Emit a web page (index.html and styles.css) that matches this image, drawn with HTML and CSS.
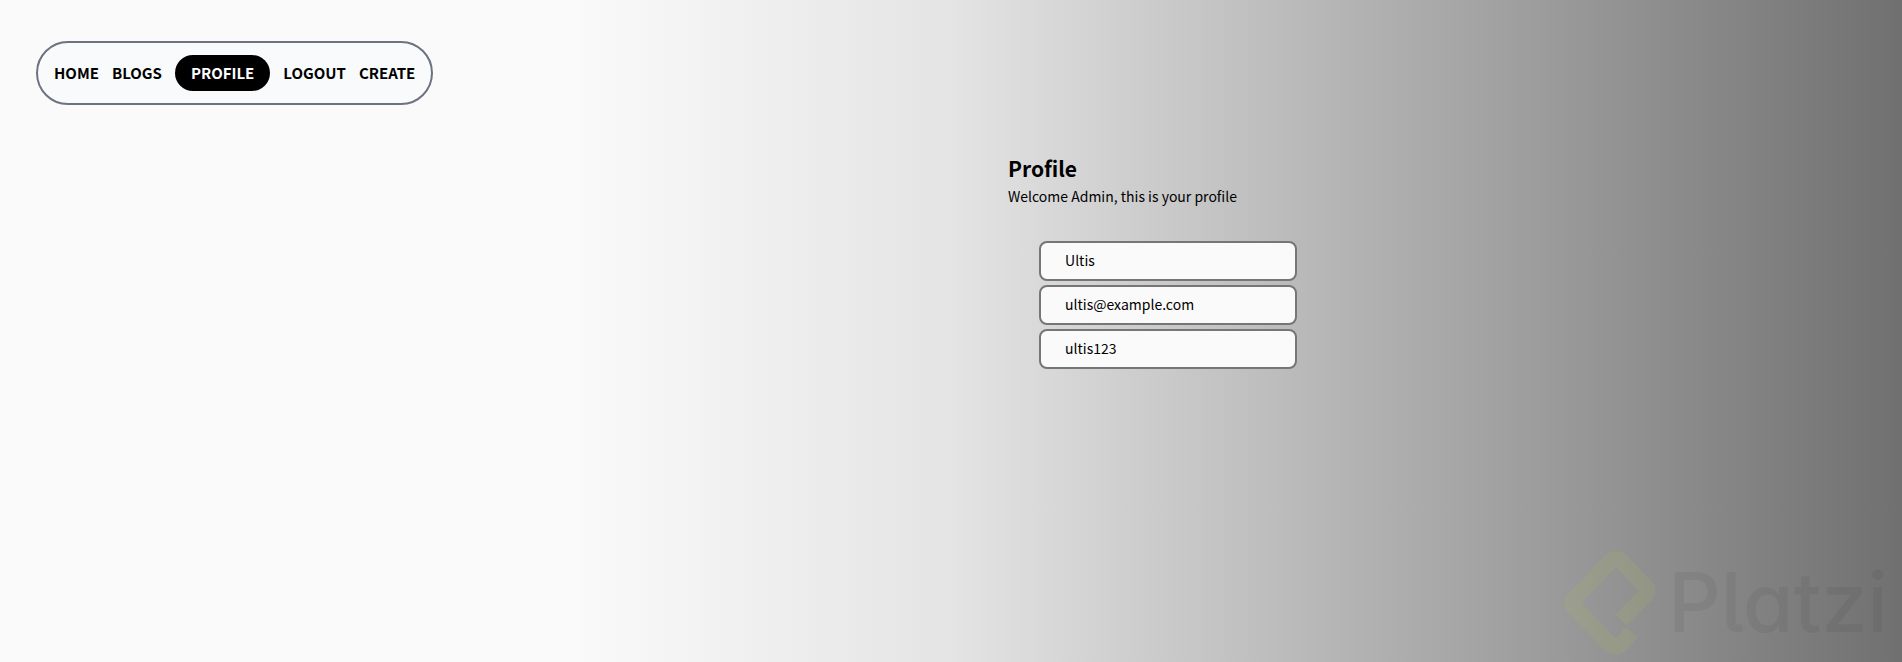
FILE: index.html
```html
<!DOCTYPE html>
<html lang="en">
<head>
    <meta charset="UTF-8">
    <meta name="viewport" content="width=device-width, initial-scale=1.0">
    <title>Profile</title>
    <link rel="stylesheet" href="styles.css">
</head>
<body>
    <header>
        <nav class="menu">
            <a href="#home">HOME</a>
            <a href="#blogs">BLOGS</a>
            <a href="#profile" class="active">PROFILE</a>
            <a href="#logout">LOGOUT</a>
            <a href="#create">CREATE</a>
        </nav>
    </header>

    <main class="profile">
        <h1>Profile</h1>
        <p>Welcome Admin, this is your profile</p>

        <form class="profile-form">
            <input type="text" aria-label="Name" value="Ultis">
            <input type="email" aria-label="Email" value="ultis@example.com">
            <input type="text" aria-label="Username" value="ultis123">
        </form>
    </main>

    <!-- Watermark -->
    <div class="watermark">
        <svg width="92" height="108" viewBox="0 0 92 108">
            <path d="M57 71L80 48Q86 42 80 36L58 13Q52 7 46 13L10 50Q6 54 10 58L46 95Q52 101 58 94L68 83" fill="none" stroke="#b0c840" stroke-width="16"/>
        </svg>
        <span>Platzi</span>
    </div>
</body>
</html>
```

FILE: styles.css
```css
body {
    font-family: "Noto Sans CJK SC", "Open Sans", sans-serif;
    font-size: 14px;
    line-height: 24px;
    color: #000000;
    min-height: 100vh;
    margin: 0;
    background: linear-gradient(to right, #fafafa 30%, #e4e4e4 50%, #707070);
}
header {
    display: flex;
    padding: 41px 36px 0;
}
.menu {
    display: flex;
    align-items: center;
    gap: 13px;
    padding: 12px 16px;
    background-color: #f9fafb;
    border: 2px solid #6b7280;
    border-radius: 32px;
}
.menu a {
    color: #000000;
    font-size: 15px;
    font-weight: bold;
    text-decoration: none;
}
.menu .active {
    padding: 6px 16px;
    background-color: #000000;
    color: #ffffff;
    border-radius: 18px;
}
.profile {
    margin: 47px 0 0 53%;
}
h1 {
    margin: 0;
    font-size: 21px;
    line-height: 32px;
}
p {
    margin: 0;
}
.profile-form {
    display: flex;
    flex-direction: column;
    gap: 4px;
    padding: 33px 31px;
}
.profile-form input {
    box-sizing: border-box;
    width: 258px;
    height: 40px;
    padding: 0 24px 2px;
    font: inherit;
    color: #000000;
    background-color: #fafafa;
    border: 2px solid #767676;
    border-radius: 8px;
}
.watermark {
    position: fixed;
    right: 14px;
    bottom: 5px;
    display: flex;
    align-items: center;
    gap: 12px;
    font-family: Inter, sans-serif;
    font-size: 82px;
    font-weight: 500;
    font-feature-settings: "cv11", "cv05";
}
.watermark svg {
    opacity: 0.13;
}
.watermark span {
    opacity: 0.05;
}
```
